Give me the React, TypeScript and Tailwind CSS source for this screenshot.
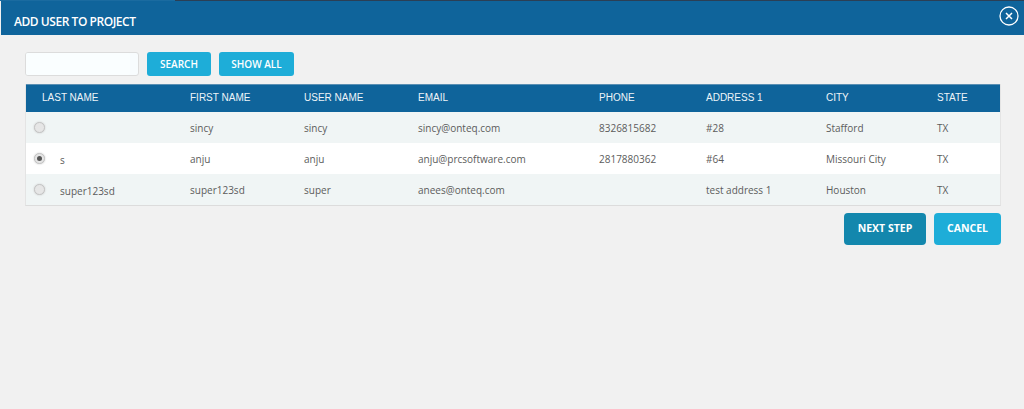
import React from "react";

const rows = [
  { last: "", first: "sincy", user: "sincy", email: "sincy@onteq.com", phone: "8326815682", address: "#28", city: "Stafford", state: "TX", checked: false },
  { last: "s", first: "anju", user: "anju", email: "anju@prcsoftware.com", phone: "2817880362", address: "#64", city: "Missouri City", state: "TX", checked: true },
  { last: "super123sd", first: "super123sd", user: "super", email: "anees@onteq.com", phone: "", address: "test address 1", city: "Houston", state: "TX", checked: false },
];

const grid = "grid grid-cols-[148px_114px_114px_181px_107px_120px_111px_1fr]";

const Radio = ({ checked }: { checked: boolean }) => (
  <span className="flex h-[11px] w-[11px] items-center justify-center rounded-full border border-[#c4c4c4] bg-[#e6e6e6] shadow-[0_0_2px_#c8c8c8]">
    {checked && <span className="h-[5px] w-[5px] rounded-full bg-[#555]" />}
  </span>
);

export default function App() {
  return (
    <div className="h-[409px] w-[1024px] overflow-hidden bg-[#f1f1f1] font-['Open_Sans',sans-serif] text-[10px] text-[#5c5c5c]">
      <div className="flex h-px">
        <div className="w-[175px] bg-[#1a6ba0]" />
        <div className="flex-1 bg-[#2b3f55]" />
      </div>
      <div className="pl-px">
        <div className="flex h-[34px] justify-between bg-[#0f649b] pr-[5px] pl-[13px]">
          <span className="pt-[12px] text-[12px] leading-[18px] font-semibold tracking-[-0.45px] text-white">ADD USER TO PROJECT</span>
          <svg viewBox="0 0 20 20" className="mt-[5px] h-[20px] w-[20px] text-white" fill="none" stroke="currentColor">
            <circle cx="10" cy="10" r="9" strokeWidth="1.3" />
            <path d="M7 7l6 6M13 7l-6 6" strokeWidth="1.5" />
          </svg>
        </div>

        <div className="w-[1000px] pt-[17px] pl-6">
          <div className="flex items-center gap-2">
            <div className="h-6 w-[114px] rounded-[3px] border border-[#dcdcdc] bg-[#f8fcfe] pr-[8px]">
              <div className="h-full w-full rounded-[2px] bg-[#fafeff]" />
            </div>
            <button className="h-6 w-[64px] rounded-[3px] bg-[#1eadd8] text-[10px] font-semibold text-white">SEARCH</button>
            <button className="h-6 w-[75px] rounded-[3px] bg-[#1eadd8] text-[10px] font-semibold text-white">SHOW ALL</button>
          </div>

          <div className="mt-[8px] border-x border-b border-[#dcdcdc] border-x-[#e4e4e4]">
            <div className={`${grid} h-[28px] items-center border-t border-t-[#5a8fb3] bg-[#0f649b] pb-[2px] pl-4 font-['Liberation_Sans',sans-serif] text-[10px] text-[#eef4f8]`}>
              <span>LAST NAME</span>
              <span>FIRST NAME</span>
              <span>USER NAME</span>
              <span>EMAIL</span>
              <span>PHONE</span>
              <span>ADDRESS 1</span>
              <span>CITY</span>
              <span>STATE</span>
            </div>
            {rows.map((row, i) => (
              <div key={row.first} className={`${grid} h-[31px] items-center pt-[2px] pl-4 ${i === 1 ? "bg-white" : "bg-[#f0f5f5]"}`}>
                <span className="relative min-h-[15px] pt-px pl-[18px]">
                  <span className="absolute top-px left-[-8px]">
                    <Radio checked={row.checked} />
                  </span>
                  {row.last}
                </span>
                <span>{row.first}</span>
                <span>{row.user}</span>
                <span>{row.email}</span>
                <span>{row.phone}</span>
                <span>{row.address}</span>
                <span>{row.city}</span>
                <span>{row.state}</span>
              </div>
            ))}
          </div>

          <div className="mt-[7px] flex justify-end gap-2">
            <button className="h-8 w-[82px] rounded-[4px] bg-[#1387ad] text-[10.5px] font-bold text-white">NEXT STEP</button>
            <button className="h-8 w-[67px] rounded-[4px] bg-[#1eadd8] text-[10.5px] font-bold text-white">CANCEL</button>
          </div>
        </div>
      </div>
    </div>
  );
}
